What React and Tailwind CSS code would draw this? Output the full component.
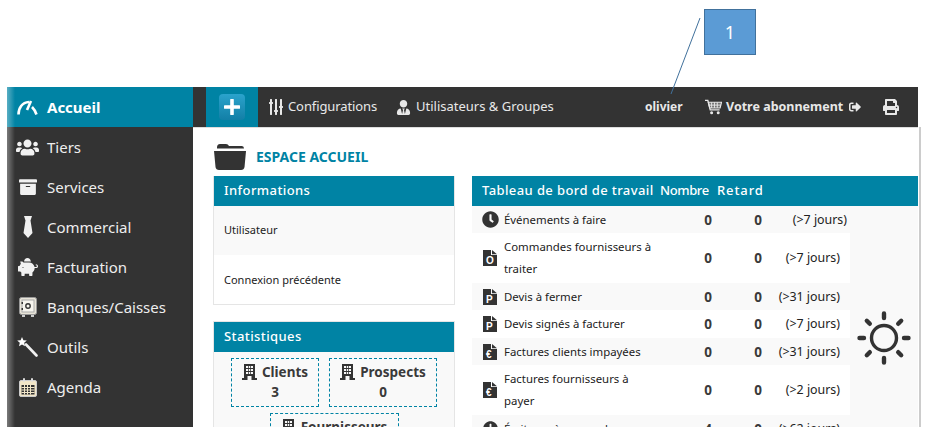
import React from "react";
import { FaUsers, FaArchive, FaPiggyBank, FaPrint, FaSlidersH, FaUserTie, FaClock, FaSignOutAlt } from "react-icons/fa";

const GaugeIcon = () => (
  <svg width="22" height="15" viewBox="0 0 22 15" fill="none" stroke="white" strokeWidth="2.6">
    <path d="M1.5 14.5C1.5 8 5 2.5 12 2" />
    <path d="M14 1L10 10" />
    <path d="M15 7C17 9 18.5 11.5 19.5 14.5" />
  </svg>
);

const TieIcon = () => (
  <svg width="10" height="22" viewBox="0 0 10 22" fill="#f1f1f1">
    <path d="M1 0H9L7.5 4.5L9.5 17L5 22L.5 17L2.5 4.5Z" />
  </svg>
);

const WandIcon = () => (
  <svg width="21" height="20" viewBox="0 0 21 20">
    <path d="M5 0L6.4 3.2L9.8 3.6L7.2 5.8L8 9.2L5 7.4L2 9.2L2.8 5.8L.2 3.6L3.6 3.2Z" fill="white" />
    <path d="M9 7.5L19.5 18.5" stroke="#f1f1f1" strokeWidth="2.6" strokeLinecap="round" />
  </svg>
);

const SafeIcon = () => (
  <svg width="18" height="20" viewBox="0 0 18 20">
    <rect x=".5" y=".5" width="17" height="17" rx="2" fill="#e8e4d8" stroke="#999" />
    <rect x="3" y="3" width="12" height="12" fill="#f7f5ee" stroke="#aaa" />
    <circle cx="9" cy="9" r="2.2" fill="none" stroke="#333" strokeWidth="1.4" />
    <rect x="2.5" y="5" width="1.5" height="2" fill="#333" />
    <rect x="2.5" y="11" width="1.5" height="2" fill="#333" />
    <rect x="3" y="18" width="3" height="2" fill="#ccc" />
    <rect x="12" y="18" width="3" height="2" fill="#ccc" />
  </svg>
);

const CalendarIcon = () => (
  <svg width="18" height="19" viewBox="0 0 18 19">
    <rect x=".5" y="2.5" width="17" height="16" rx="1.5" fill="#f2e6c8" stroke="#ccc" />
    <rect x="2.5" y="7" width="13" height="9.5" fill="#333" />
    <path d="M2.5 9.5H15.5M2.5 12H15.5M2.5 14.5H15.5M5.5 7V16.5M8.5 7V16.5M11.5 7V16.5" stroke="#f2e6c8" strokeWidth="1" />
    <rect x="4" y="0" width="2" height="4" rx="1" fill="#ddd" />
    <rect x="12" y="0" width="2" height="4" rx="1" fill="#ddd" />
  </svg>
);

const FolderIcon = () => (
  <svg width="32" height="26" viewBox="0 0 32 26" fill="#333">
    <path d="M3 3.5Q3 0 6 0H12Q14 0 15 2H28Q30 2 30 4.5H3Z" />
    <path d="M0 7H32L30.5 23Q30 26 27 26H5Q2 26 1.5 23Z" />
  </svg>
);

const BuildingIcon = () => (
  <svg width="15" height="16" viewBox="0 0 15 16" fill="#333">
    <path fillRule="evenodd" d="M2 0H13V14H15V16H0V14H2ZM4 2V4H6V2ZM6.75 2V4H8.25V2ZM9 2V4H11V2ZM4 5V7H6V5ZM6.75 5V7H8.25V5ZM9 5V7H11V5ZM4 8V10H6V8ZM6.75 8V10H8.25V8ZM9 8V10H11V8ZM5.5 12V16H9.5V12Z" />
  </svg>
);

const CartIcon = () => (
  <svg width="18" height="16" viewBox="0 0 18 16" fill="none" stroke="#e8e8e8">
    <path d="M0 1H3L5.5 11H15.5" strokeWidth="1.4" />
    <path d="M3.5 3H17.5L16 9H5Z" fill="#e8e8e8" fillOpacity=".35" strokeWidth="1.2" />
    <path d="M7 3V9M10 3V9M13 3V9M4 6H17" strokeWidth="1" />
    <circle cx="7" cy="14" r="1.6" fill="#e8e8e8" stroke="none" />
    <circle cx="14" cy="14" r="1.6" fill="#e8e8e8" stroke="none" />
  </svg>
);

const SunIcon = () => (
  <svg width="54" height="54" viewBox="0 0 54 54" fill="none" stroke="#333">
    <circle cx="27" cy="27" r="12.5" strokeWidth="3.4" />
    <path d="M27 2.5V7M27 47V51.5M2.5 27H7M47 27H51.5M9.8 9.8L12.8 12.8M41.2 41.2L44.2 44.2M9.8 44.2L12.8 41.2M41.2 12.8L44.2 9.8" strokeWidth="4.4" strokeLinecap="round" />
  </svg>
);

const DocIcon = ({ letter }) => (
  <span className="relative block w-[14px] h-[16px]">
    <svg width="14" height="16" viewBox="0 0 14 16" className="block">
      <path d="M0 0H8V5H14V16H0Z" fill="#333" />
      <path d="M9 0L14 4.2H9Z" fill="#333" />
    </svg>
    <span className="absolute left-[3px] top-[6px] text-[10px] leading-[10px] font-bold text-white font-['Liberation_Sans',sans-serif]">{letter}</span>
  </span>
);

const menu = [
  { label: "Accueil", icon: <GaugeIcon />, active: true },
  { label: "Tiers", icon: <FaUsers className="text-[#f1f1f1] text-[23px]" /> },
  { label: "Services", icon: <FaArchive className="text-[#f1f1f1] text-[18px]" /> },
  { label: "Commercial", icon: <TieIcon /> },
  { label: "Facturation", icon: <FaPiggyBank className="text-[#f1f1f1] text-[20px] -scale-x-100" /> },
  { label: "Banques/Caisses", icon: <SafeIcon /> },
  { label: "Outils", icon: <WandIcon /> },
  { label: "Agenda", icon: <CalendarIcon /> },
];

const rows = [
  { icon: <FaClock className="text-[#333] text-[17px]" />, label: "Événements à faire", n: 0, r: 0, note: "(>7 jours)", h: "h-[27px]", wide: true, shade: true },
  { icon: <DocIcon letter="O" />, label: "Commandes fournisseurs à traiter", n: 0, r: 0, note: "(>7 jours)", h: "h-[50px]" },
  { icon: <DocIcon letter="P" />, label: "Devis à fermer", n: 0, r: 0, note: "(>31 jours)", h: "h-[27px]", shade: true },
  { icon: <DocIcon letter="P" />, label: "Devis signés à facturer", n: 0, r: 0, note: "(>7 jours)", h: "h-[28px]" },
  { icon: <DocIcon letter="€" />, label: "Factures clients impayées", n: 0, r: 0, note: "(>31 jours)", h: "h-[27px]", shade: true },
  { icon: <DocIcon letter="€" />, label: "Factures fournisseurs à payer", n: 0, r: 0, note: "(>2 jours)", h: "h-[50px]" },
  { icon: <FaClock className="text-[#333] text-[15px]" />, label: "Écritures à rapprocher", n: 4, r: 0, note: "(>62 jours)", h: "h-[27px]", shade: true },
];

function PanelHeader({ children }) {
  return <div className="h-[30px] bg-[#0083a4] text-white text-[13px] tracking-[0.4px] pl-[10px] flex items-center font-medium">{children}</div>;
}

function Stat({ label, value, width }) {
  return (
    <div className={`${width} h-[49px] border border-dashed border-[#0083a4] flex flex-col items-center pt-[3px]`}>
      <div className="flex items-center gap-[5px] text-[13.5px] font-bold text-[#3a3a3a] leading-[20px]">
        <BuildingIcon />
        {label}
      </div>
      <div className="text-[13.5px] font-bold text-[#3a3a3a] leading-[20px]">{value}</div>
    </div>
  );
}

export default function App() {
  return (
    <div className="relative w-[937px] h-[438px] bg-white overflow-hidden font-['Noto_Sans',sans-serif]">
      {/* annotation */}
      <div className="absolute left-[704px] top-[9px] w-[52px] h-[46px] bg-[#5b9bd5] border border-[#41719c] text-white text-[18px] flex items-center justify-center">1</div>
      <svg className="absolute left-[665px] top-[15px] z-10" width="40" height="85">
        <path d="M35 3L6 79" stroke="#41719c" strokeWidth="1" fill="none" />
      </svg>

      <div className="pt-[87px] pl-[7px] flex w-[921px] h-[427px]">
        {/* sidebar */}
        <div className="relative w-[186px] h-[340px] shrink-0 bg-[#333333] flex flex-col">
          {menu.map((m) => (
            <div key={m.label} className={`h-[40px] flex items-center text-[15px] ${m.active ? "bg-[#0083a4] text-white font-bold" : "text-[#eeeeee]"}`}>
              <span className="w-[40px] flex justify-center shrink-0 pl-[1px]">{m.icon}</span>
              {m.label}
            </div>
          ))}
          <div className="absolute inset-y-0 left-0 w-[8px] bg-gradient-to-r from-white/35 to-transparent" />
        </div>

        {/* main */}
        <div className="w-[728px] flex flex-col">
          <div className="w-[725px] h-[40px] bg-[#333333] flex items-center text-[#e8e8e8] shrink-0 whitespace-nowrap shadow-[0_1px_0_#dddddd]">
            <div className="ml-[13px] w-[52px] h-full bg-[#0083a4] flex items-center justify-center">
              <div className="w-[26px] h-[26px] rounded-[4px] bg-gradient-to-b from-[#2aa3cc] to-[#127fa6] flex items-center justify-center text-white">
                <svg width="16" height="16" viewBox="0 0 16 16"><path d="M8 1V15M1 8H15" stroke="white" strokeWidth="3.6" strokeLinecap="round" /></svg>
              </div>
            </div>
            <FaSlidersH className="ml-[10px] text-[16px] rotate-90" />
            <span className="ml-[4px] w-[90px] text-[13px] tracking-[-0.1px]">Configurations</span>
            <FaUserTie className="ml-[18px] w-[15px] text-[15px]" />
            <span className="ml-[5px] w-[137px] text-[13px]">Utilisateurs &amp; Groupes</span>
            <span className="ml-[92px] w-[38px] text-[12px] font-bold">olivier</span>
            <span className="ml-[22px] w-[17px] flex"><CartIcon /></span>
            <span className="ml-[4px] w-[113px] text-[12.5px] font-bold">Votre abonnement</span>
            <FaSignOutAlt className="ml-[10px] w-[12px] text-[12px]" />
            <FaPrint className="ml-[22px] w-[16px] text-[16px]" />
          </div>

          <div className="flex-1 min-h-0 border-r-2 border-[#cccccc] overflow-hidden">
            <div className="flex items-center h-[49px] pl-[21px] pt-[10px] gap-[10px]">
              <FolderIcon />
              <span className="text-[14px] font-bold text-[#0083a4]">ESPACE ACCUEIL</span>
            </div>

            <div className="flex pl-[20px] gap-[17px]">
              <div className="w-[242px] shrink-0">
                <div className="border border-[#e5e5e5] border-t-0">
                  <PanelHeader>Informations</PanelHeader>
                  <div className="h-[49px] bg-[#f9f9f9] flex items-center pl-[10px] text-[11px] text-[#222]">Utilisateur</div>
                  <div className="h-[49px] flex items-center pl-[10px] pt-[1px] text-[11px] text-[#222]">Connexion précédente</div>
                </div>
                <div className="mt-[16px] border border-[#e5e5e5] border-b-0 bg-[#f9f9f9] h-[120px]">
                  <PanelHeader>Statistiques</PanelHeader>
                  <div className="flex justify-center gap-[10px] mt-[6px]">
                    <Stat label="Clients" value="3" width="w-[88px]" />
                    <Stat label="Prospects" value="0" width="w-[108px]" />
                  </div>
                  <div className="flex justify-center mt-[6px]">
                    <Stat label="Fournisseurs" value="0" width="w-[129px]" />
                  </div>
                </div>
              </div>

              <div className="w-[446px] shrink-0 bg-[#f9f9f9]">
                <div className="h-[30px] bg-[#0083a4] text-white text-[13px] tracking-[0.4px] pl-[10px] flex items-center font-medium">
                  <span className="w-[178px] whitespace-nowrap">Tableau de bord de travail</span>
                  <span className="w-[57px] tracking-[-0.4px]">Nombre</span>
                  <span className="tracking-[0.9px]">Retard</span>
                </div>
                <div className="flex">
                  <div className="w-[378px] shrink-0">
                    {rows.map((r) => (
                      <div key={r.label} className={`${r.h} flex items-center text-[11.4px] leading-[22px] text-[#222] ${r.shade ? "bg-[#f9f9f9]" : "bg-white"}`}>
                        <span className="w-[32px] shrink-0 flex justify-center pl-[4px]">{r.icon}</span>
                        <span className="w-[150px] shrink-0">{r.label}</span>
                        <span className="w-[58px] shrink-0 text-right text-[13.5px] font-bold text-[#3a3a3a]">{r.n}</span>
                        <span className="w-[50px] shrink-0 text-right text-[13.5px] font-bold text-[#3a3a3a]">{r.r}</span>
                        <span className={`flex-1 text-right text-[12.4px] whitespace-nowrap ${r.wide ? "pr-[3px]" : "pr-[10px]"}`}>{r.note}</span>
                      </div>
                    ))}
                  </div>
                  <div className="flex-1 flex items-start justify-center pt-[105px]">
                    <SunIcon />
                  </div>
                </div>
              </div>
            </div>
          </div>
        </div>
      </div>
    </div>
  );
}
